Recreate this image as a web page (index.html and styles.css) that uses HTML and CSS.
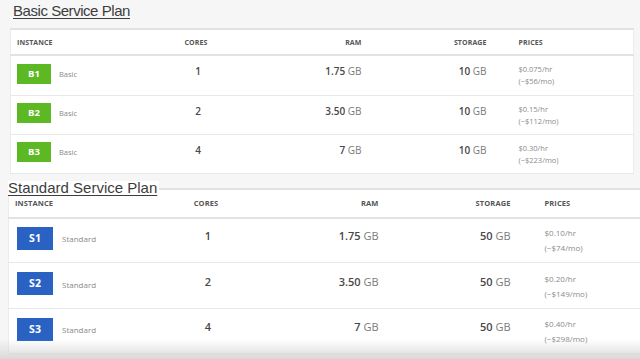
FILE: index.html
```html
<!DOCTYPE html>
<html>
<head>
    <title>Service Plans</title>
    <link rel="stylesheet" href="styles.css">
</head>
<body>

    <div class="plan plan-basic">
        <h2 class="plan-title">Basic Service Plan</h2>
        <table class="plan-table">
            <colgroup>
                <col class="c-inst"><col class="c-cores"><col class="c-ram"><col class="c-storage"><col class="c-prices">
            </colgroup>
            <tr class="head-row">
                <th class="left">INSTANCE</th>
                <th>CORES</th>
                <th class="right">RAM</th>
                <th class="right">STORAGE</th>
                <th class="left pad-price">PRICES</th>
            </tr>
            <tr>
                <td><span class="badge green">B1</span><span class="tier">Basic</span></td>
                <td class="num center">1</td>
                <td class="num right">1.75 <span class="unit">GB</span></td>
                <td class="num right">10 <span class="unit">GB</span></td>
                <td class="price pad-price">$0.075/hr<br>(~$56/mo)</td>
            </tr>
            <tr>
                <td><span class="badge green">B2</span><span class="tier">Basic</span></td>
                <td class="num center">2</td>
                <td class="num right">3.50 <span class="unit">GB</span></td>
                <td class="num right">10 <span class="unit">GB</span></td>
                <td class="price pad-price">$0.15/hr<br>(~$112/mo)</td>
            </tr>
            <tr>
                <td><span class="badge green">B3</span><span class="tier">Basic</span></td>
                <td class="num center">4</td>
                <td class="num right">7 <span class="unit">GB</span></td>
                <td class="num right">10 <span class="unit">GB</span></td>
                <td class="price pad-price">$0.30/hr<br>(~$223/mo)</td>
            </tr>
        </table>
    </div>

    <div class="plan plan-standard">
        <h2 class="plan-title">Standard Service Plan</h2>
        <table class="plan-table">
            <colgroup>
                <col class="c-inst"><col class="c-cores"><col class="c-ram"><col class="c-storage"><col class="c-prices">
            </colgroup>
            <tr class="head-row">
                <th class="left">INSTANCE</th>
                <th>CORES</th>
                <th class="right">RAM</th>
                <th class="right">STORAGE</th>
                <th class="left pad-price">PRICES</th>
            </tr>
            <tr>
                <td><span class="badge blue">S1</span><span class="tier">Standard</span></td>
                <td class="num center">1</td>
                <td class="num right">1.75 <span class="unit">GB</span></td>
                <td class="num right">50 <span class="unit">GB</span></td>
                <td class="price pad-price">$0.10/hr<br>(~$74/mo)</td>
            </tr>
            <tr>
                <td><span class="badge blue">S2</span><span class="tier">Standard</span></td>
                <td class="num center">2</td>
                <td class="num right">3.50 <span class="unit">GB</span></td>
                <td class="num right">50 <span class="unit">GB</span></td>
                <td class="price pad-price">$0.20/hr<br>(~$149/mo)</td>
            </tr>
            <tr>
                <td><span class="badge blue">S3</span><span class="tier">Standard</span></td>
                <td class="num center">4</td>
                <td class="num right">7 <span class="unit">GB</span></td>
                <td class="num right">50 <span class="unit">GB</span></td>
                <td class="price pad-price">$0.40/hr<br>(~$298/mo)</td>
            </tr>
        </table>
    </div>

    <div class="shade"></div>

</body>
</html>
```

FILE: styles.css
```css
body {
    margin: 0;
    height: 359px;
    overflow: hidden;
    background-color: #f6f6f6;
    font-family: "Open Sans", "Noto Sans", sans-serif;
    color: #444;
}

.plan-title {
    margin: 0;
    font-family: "Liberation Sans", Arial, sans-serif;
    font-weight: normal;
    color: #3d3d3d;
    text-decoration: underline;
    text-decoration-thickness: 1px;
    text-underline-offset: 2px;
    line-height: 18px;
}

.plan-table {
    border-collapse: collapse;
    table-layout: fixed;
    background: #fff;
    border-top: 2px solid #e2e2e2;
    border-left: 1px solid #ececec;
    border-right: 1px solid #ececec;
}

.plan-table th {
    font-size: 7px;
    font-weight: bold;
    color: #555;
    letter-spacing: 0.1px;
    padding: 0 4px 0 0;
    border-bottom: 2px solid #e2e2e2;
}

.plan-table td {
    padding: 0;
    border-bottom: 1px solid #e8e8e8;
    vertical-align: middle;
}

.left { text-align: left; }
.right { text-align: right; }
.center { text-align: center; }

.plan-table th.left:first-child {
    padding-left: 6px;
}

.badge {
    display: inline-block;
    vertical-align: middle;
    color: #fff;
    font-weight: bold;
    text-align: center;
}

.green { background: #5cb923; }
.blue { background: #2a62c4; }

.tier {
    display: inline-block;
    vertical-align: middle;
    color: #8a8a8a;
}

.num {
    font-weight: 600;
    color: #474747;
}

.num.right {
    padding-right: 4px;
}

.unit {
    font-weight: normal;
    color: #7a7a7a;
}

.price {
    color: #8a8a8a;
}

/* basic plan, a bit smaller in the recording */
.plan-basic {
    padding: 2px 0 0 10px;
}

.plan-basic .plan-title {
    margin-left: 3px;
    margin-bottom: 8px;
    font-size: 15px;
    letter-spacing: -0.45px;
}

.plan-basic .plan-table { width: 623px; }
.plan-basic .c-inst { width: 150px; }
.plan-basic .c-cores { width: 75px; }
.plan-basic .c-ram { width: 130px; }
.plan-basic .c-storage { width: 125px; }
.plan-basic .c-prices { width: 143px; }

.plan-basic .head-row { height: 26px; }
.plan-basic tr { height: 39px; }
.plan-basic tr:nth-child(2) { height: 40px; }

.plan-basic .badge {
    width: 34px;
    height: 20px;
    line-height: 20px;
    font-size: 9.5px;
    margin: 0 8px 4px 6px;
}

.plan-basic .tier {
    font-size: 7.5px;
    margin-bottom: 4px;
}

.plan-basic .num {
    font-size: 10px;
    padding-bottom: 8px;
}

.plan-basic .price {
    font-size: 7.5px;
    line-height: 12px;
}

.plan-basic .pad-price { padding-left: 28px; }

/* standard plan */
.plan-standard {
    padding: 7px 0 0 8px;
}

.plan-standard .plan-title {
    position: relative;
    width: max-content;
    margin-bottom: -7px;
    padding-right: 2px;
    font-size: 15px;
    background: #fff;
    line-height: 14px;
}

.plan-standard .plan-table { width: 634px; }
.plan-standard .c-inst { width: 162px; }
.plan-standard .c-cores { width: 75px; }
.plan-standard .c-ram { width: 137px; }
.plan-standard .c-storage { width: 132px; }
.plan-standard .c-prices { width: 128px; }

.plan-standard .head-row { height: 29px; }
.plan-standard .head-row th { font-size: 7.5px; padding-top: 0; }
.plan-standard tr { height: 45px; }
.plan-standard tr:nth-child(3) { height: 46px; }

.plan-standard .badge {
    width: 36px;
    height: 23px;
    line-height: 23px;
    font-size: 10.5px;
    margin: 0 9px 4px 8px;
}

.plan-standard .tier {
    font-size: 8px;
    margin-bottom: 3px;
}

.plan-standard .num {
    font-size: 11px;
    padding-bottom: 9px;
}

.plan-standard .price {
    font-size: 8px;
    line-height: 15px;
}

.plan-standard .pad-price { padding-left: 30px; }

/* darker band along the bottom edge of the recording */
.shade {
    position: fixed;
    left: 0;
    right: 0;
    bottom: 0;
    height: 20px;
    background: linear-gradient(to bottom, rgba(205, 205, 205, 0), rgba(205, 205, 205, 0.7));
    pointer-events: none;
}
```
